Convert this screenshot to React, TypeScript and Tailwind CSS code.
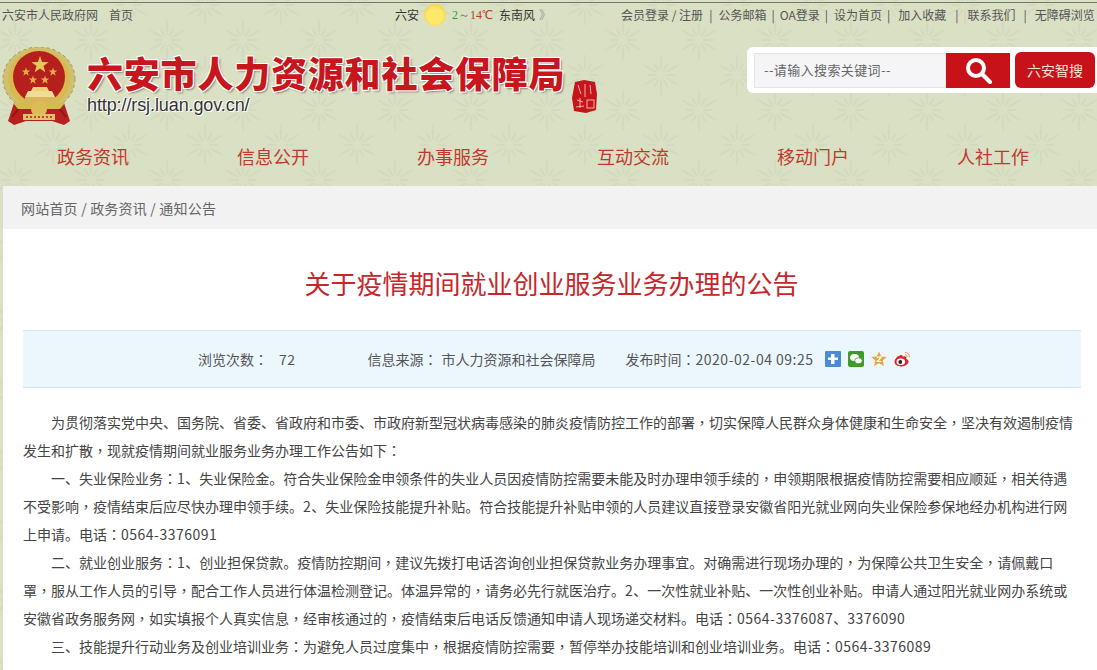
const font = "font-['Microsoft_YaHei','Noto_Sans_CJK_SC','Noto_Sans',sans-serif]";

const navItems = ['政务资讯', '信息公开', '办事服务', '互动交流', '移动门户', '人社工作'];

const bodyLines = [
  { indent: true, text: '为贯彻落实党中央、国务院、省委、省政府和市委、市政府新型冠状病毒感染的肺炎疫情防控工作的部署，切实保障人民群众身体健康和生命安全，坚决有效遏制疫情' },
  { indent: false, text: '发生和扩散，现就疫情期间就业服务业务办理工作公告如下：' },
  { indent: true, text: '一、失业保险业务：1、失业保险金。符合失业保险金申领条件的失业人员因疫情防控需要未能及时办理申领手续的，申领期限根据疫情防控需要相应顺延，相关待遇' },
  { indent: false, text: '不受影响，疫情结束后应尽快办理申领手续。2、失业保险技能提升补贴。符合技能提升补贴申领的人员建议直接登录安徽省阳光就业网向失业保险参保地经办机构进行网' },
  { indent: false, text: '上申请。电话：0564-3376091' },
  { indent: true, text: '二、就业创业服务：1、创业担保贷款。疫情防控期间，建议先拨打电话咨询创业担保贷款业务办理事宜。对确需进行现场办理的，为保障公共卫生安全，请佩戴口' },
  { indent: false, text: '罩，服从工作人员的引导，配合工作人员进行体温检测登记。体温异常的，请务必先行就医治疗。2、一次性就业补贴、一次性创业补贴。申请人通过阳光就业网办系统或' },
  { indent: false, text: '安徽省政务服务网，如实填报个人真实信息，经审核通过的，疫情结束后电话反馈通知申请人现场递交材料。电话：0564-3376087、3376090' },
  { indent: true, text: '三、技能提升行动业务及创业培训业务：为避免人员过度集中，根据疫情防控需要，暂停举办技能培训和创业培训业务。电话：0564-3376089' },
];

// the reference centres ，and ：in their cell and sets digits a bit wider
function Rich({ text }: { text: string }) {
  return (
    <>
      {text.split(/([，：]|[0-9][0-9:-]*)/).map((part, i) => {
        if (part === '，' || part === '：') {
          return <span key={i} className="font-['Noto_Sans_CJK_TC',sans-serif]">{part}</span>;
        }
        if (/^[0-9]/.test(part)) {
          return <span key={i} className="tracking-[0.5px]">{part}</span>;
        }
        return part;
      })}
    </>
  );
}

function starPoints(cx: number, cy: number, r: number) {
  const pts: string[] = [];
  for (let i = 0; i < 10; i++) {
    const rad = i % 2 === 0 ? r : r * 0.4;
    const a = -Math.PI / 2 + (i * Math.PI) / 5;
    pts.push(`${cx + rad * Math.cos(a)},${cy + rad * Math.sin(a)}`);
  }
  return pts.join(' ');
}

function Emblem() {
  return (
    <svg width="76" height="80" viewBox="0 0 76 80" className="shrink-0">
      {/* wreath */}
      <ellipse cx="37" cy="32" rx="36" ry="32" fill="#cfc071" />
      <ellipse cx="37" cy="32" rx="36" ry="32" fill="none" stroke="#a8964a" strokeWidth="1" strokeDasharray="3 3" />
      <ellipse cx="37" cy="32" rx="31" ry="29" fill="#d8b94e" />
      {/* ribbon */}
      <path d="M12 56 L6 74 L12 78 L24 74 H50 L62 78 L68 74 L62 56 Z" fill="#b8201e" />
      <path d="M10 70 L18 60 M64 70 L56 60" stroke="#8f1512" strokeWidth="2" />
      <circle cx="37" cy="30" r="26" fill="#b5201c" />
      <polygon points={starPoints(38, 18, 9)} fill="#e8c65a" />
      <polygon points={starPoints(24, 25, 4.500)} fill="#e0ad4c" />
      <polygon points={starPoints(51, 25, 4.500)} fill="#e0ad4c" />
      <polygon points={starPoints(31, 33, 4.500)} fill="#e0ad4c" />
      <polygon points={starPoints(43, 33, 4.500)} fill="#e0ad4c" />
      {/* gate */}
      <path d="M31 40 H45 L47 44 H29 Z" fill="#e9cf78" />
      <path d="M26 44 H50 L53 50 H23 Z" fill="#f0dc96" />
      <rect x="23" y="50" width="30" height="7" fill="#d9b55a" />
      <path d="M11 56 H63 L58 62 H16 Z" fill="#d8b94e" />
      <circle cx="37" cy="62" r="8" fill="#dcbc55" />
      <rect x="21" y="67" width="32" height="6" fill="#e0c26a" />
      <path d="M24 70 H50" stroke="#a5231c" strokeWidth="1.500" strokeDasharray="2 2" />
    </svg>
  );
}

function Seal() {
  return (
    <svg width="25" height="33" viewBox="0 0 25 33" className="shrink-0">
      <path d="M3 2 L12 0 L23 2 L25 14 L24 30 L14 33 L2 31 L0 18 Z" fill="#c5141a" />
      <path d="M6 5 L9 14 M13 4 V17 M18 5 L19 14 M5 20 L11 22 M8 18 V28 M4 27 L12 26" stroke="#eeb3a8" strokeWidth="1" fill="none" />
      <rect x="15" y="20" width="7" height="8" fill="none" stroke="#eeb3a8" strokeWidth="1" />
    </svg>
  );
}

function Flake({ x, y }: { x: number; y: number }) {
  return (
    <g transform={`translate(${x} ${y})`}>
      {[0, 30, 60, 90, 120, 150, 180, 210, 240, 270, 300, 330].map((deg) => (
        <g key={deg} transform={`rotate(${deg})`}>
          <ellipse cy={deg % 60 === 0 ? -13 : -9} rx="1.200" ry={deg % 60 === 0 ? 8 : 5} />
        </g>
      ))}
    </g>
  );
}

function Pattern() {
  return (
    <svg className="absolute inset-0 h-full w-full" aria-hidden="true">
      <defs>
        <pattern id="floral" width="76" height="70" patternUnits="userSpaceOnUse">
          <g fill="#d4dabd">
            <Flake x={15} y={40} />
            <Flake x={91} y={40} />
            <Flake x={53} y={5} />
            <Flake x={53} y={75} />
          </g>
        </pattern>
      </defs>
      <rect width="100%" height="100%" fill="url(#floral)" />
    </svg>
  );
}

function ShareIcons() {
  return (
    <div className="ml-[11px] flex items-center gap-[7px]">
      <svg width="16" height="16" viewBox="0 0 16 16">
        <rect width="16" height="16" rx="1" fill="#4a8ad6" />
        <path d="M6 3h3.500v3.500H13V9H9.500v4H6V9H3V6.500h3z" fill="#fff" />
      </svg>
      <svg width="16" height="16" viewBox="0 0 16 16">
        <rect width="16" height="16" rx="2" fill="#3f9a2b" />
        <ellipse cx="6.500" cy="6.500" rx="4.500" ry="3.500" fill="#fff" />
        <ellipse cx="10.500" cy="9.800" rx="3.800" ry="3" fill="#fff" stroke="#3f9a2b" strokeWidth="0.800" />
      </svg>
      <svg width="16" height="16" viewBox="0 0 16 16">
        <polygon points="8,0.500 10.300,5.500 15.800,6 11.700,9.600 13,15 8,12.200 3,15 4.300,9.600 0.200,6 5.700,5.500" fill="#e7a83a" />
        <path d="M5.800 6.200h4.400L6.400 10.500h4" fill="none" stroke="#fff" strokeWidth="1.200" />
      </svg>
      <svg width="17" height="16" viewBox="0 0 17 16">
        <path d="M7 4C3.500 5 .5 8 .5 10.800.5 13.500 3.500 15.500 7 15.500c4 0 7.500-2.200 7.500-5 0-1.500-1.300-2.200-2.300-2.500.5-1.200.3-3-2-2.800-.8 0-1.600.4-1.800.3C8.600 4.500 8.200 3.700 7 4z" fill="#d8262c" />
        <ellipse cx="6.800" cy="10.800" rx="4.300" ry="3.300" fill="#fff" />
        <circle cx="6.300" cy="11" r="1.900" fill="#222" />
        <path d="M11 1.500c2.600-.3 4.800 1.800 4.300 4.700M11 3.700c1.300-.2 2.500 1 2.200 2.300" fill="none" stroke="#e8a33a" strokeWidth="1" />
      </svg>
    </div>
  );
}

export default function App() {
  return (
    <div className={`${font} relative h-[670px] w-[1097px] overflow-hidden bg-[#dae0c4]`}>
      <Pattern />
      <div className="relative flex h-full flex-col">
        {/* top bar */}
        <div className="mt-[2px] flex h-[27px] items-center border-t border-[#77776f] pb-[2px] text-[12px] text-[#555]">
          <span className="ml-[2px]">六安市人民政府网</span>
          <span className="ml-[11px]">首页</span>
          <div className="ml-[262px] flex w-[170px] shrink-0 items-center">
            <span className="text-[#333]">六安</span>
            <span className="ml-[5px] h-[22px] w-[22px] rounded-full bg-[radial-gradient(circle_at_50%_55%,#ffe96a_45%,#f7cf52_75%,#f1d98a)]" />
            <span className="ml-[6px] font-['Liberation_Serif',serif] text-[12px]">
              <span className="text-[#2e9b3e]">2</span>
              <span className="text-[#777]">～</span>
              <span className="text-[#c0392b]">14℃</span>
            </span>
            <span className="ml-[6px] text-[#333]">东南风</span>
            <span className="ml-[4px] text-[#999]">》</span>
          </div>
          <div className="ml-[56px] flex gap-[5px] whitespace-nowrap">
            <span>会员登录 / 注册</span><span className="ml-[1px]">|</span><span className="ml-[1px]">公务邮箱</span><span>|</span><span>OA登录</span><span>|</span><span className="ml-[1px]">设为首页</span>
            <span>|</span><span className="ml-[3px]">加入收藏</span><span className="mx-[4px]">|</span><span>联系我们</span>
            <span className="mx-[3px]">|</span><span>无障碍浏览</span>
          </div>
        </div>

        {/* logo and search */}
        <div className="flex h-[104px] items-start">
          <div className="mt-[18px] ml-[2px]">
            <Emblem />
          </div>
          <div className="ml-[9px] mt-[20px] w-[476px] shrink-0">
            <div className="text-[36px] leading-[46px] font-black text-[#c8161d] tracking-[0.8px] whitespace-nowrap [text-shadow:1px_1px_0_#fff,-1px_-1px_0_#fff,1px_-1px_0_#fff,-1px_1px_0_#fff,2px_2px_2px_#8a8a7a]">
              六安市人力资源和社会保障局
            </div>
            <div className="font-['Liberation_Sans',sans-serif] text-[18px] leading-[20px] tracking-[-0.1px] text-[#333] [text-shadow:1px_1px_0_#fff,-1px_-1px_0_#fff]">
              http://rsj.luan.gov.cn/
            </div>
          </div>
          <div className="ml-[9px] mt-[51px]">
            <Seal />
          </div>
          <div className="ml-[150px] mt-[18px] flex h-[46px] w-[350px] shrink-0 items-center justify-between rounded-l-[6px] bg-white py-[5px] pr-[2px] pl-[7px]">
            <div className="flex h-[35px] w-[256px]">
              <div className="flex flex-1 items-center border border-[#e4e4e4] bg-[#f5f5f7] pl-[9px] text-[13px] tracking-[0.4px] text-[#666]">
                --请输入搜索关键词--
              </div>
              <div className="flex w-[64px] items-center justify-center bg-[#c8121a]">
                <svg width="28" height="28" viewBox="0 0 28 28" fill="none" stroke="#fff">
                  <circle cx="12" cy="12" r="8" strokeWidth="4" />
                  <path d="M18 18l8 8" strokeWidth="4" strokeLinecap="round" />
                </svg>
              </div>
            </div>
            <div className="flex h-[36px] w-[80px] items-center justify-center rounded-[6px] bg-[#c8121a] text-[14px] text-[#fbe0d8]">
              六安智搜
            </div>
          </div>
        </div>

        {/* nav */}
        <div className="flex h-[53px] items-start pt-[10px] pl-[57px]">
          {navItems.map((item) => (
            <span key={item} className="w-[180px] shrink-0 text-[18px] leading-[26px] text-[#bf3a2d]">
              {item}
            </span>
          ))}
        </div>

        {/* content */}
        <div className="ml-[3px] flex-1 bg-white">
          <div className="flex h-[43px] items-center bg-[#f2f2f3] pt-[1px] pl-[18px] text-[14px] tracking-[0.2px] text-[#666]">
            网站首页 / 政务资讯 / 通知公告
          </div>
          <h1 className="mt-[36px] pl-[3px] text-center text-[26px] leading-[36px] font-normal text-[#c9262b]">
            关于疫情期间就业创业服务业务办理的公告
          </h1>
          <div className="mt-[29px] mr-[16px] ml-[20px] flex h-[58px] items-center border-y border-[#d9e5ea] bg-[#ebf7fd] pl-[175px] text-[14px] text-[#555]">
            <span><Rich text="浏览次数：" /></span>
            <span className="ml-[11px]"><Rich text="72" /></span>
            <span className="ml-[72px]"><Rich text="信息来源：" /></span>
            <span className="ml-[4px]">市人力资源和社会保障局</span>
            <span className="ml-[30px]">发布时间<Rich text="：" /><span className="tracking-[0.5px]">2020-02-04 09:25</span></span>
            <ShareIcons />
          </div>
          <div className="mt-[20px] pr-[16px] pl-[20px] text-[14px] leading-[28px] text-[#444]">
            {bodyLines.map((line) => (
              <div key={line.text} className={line.indent ? 'pl-[28px] whitespace-nowrap' : 'whitespace-nowrap'}>
                <Rich text={line.text} />
              </div>
            ))}
          </div>
        </div>
      </div>
    </div>
  );
}
